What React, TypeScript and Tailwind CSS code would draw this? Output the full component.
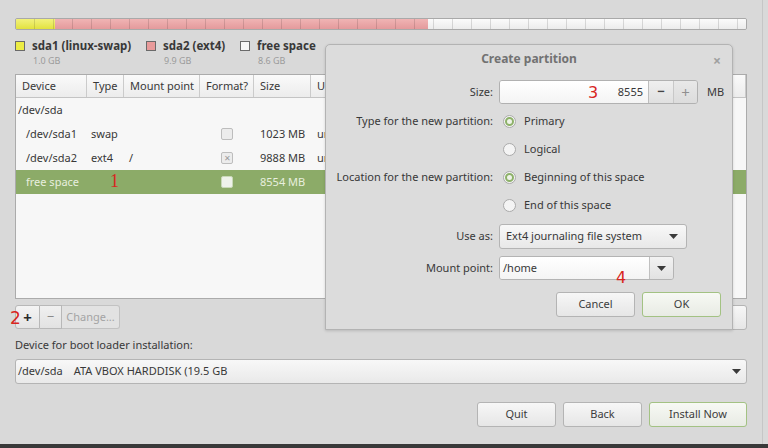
import React from 'react'

function Arrow() {
  return (
    <svg width="9" height="5" viewBox="0 0 9 5" className="shrink-0">
      <path d="M0 0h9L4.5 5z" fill="#3a3a3a" />
    </svg>
  )
}

function Check({ mark, onGreen }: { mark?: boolean; onGreen?: boolean }) {
  return (
    <div
      className={
        onGreen
          ? 'w-[12px] h-[12px] rounded-[2px] border border-[#c9d9b8] bg-[#eef2ea]'
          : 'w-[12px] h-[12px] rounded-[2px] border border-[#bdbdbd] bg-[#ececec] flex items-center justify-center'
      }
    >
      {mark && <span className="text-[8px] leading-none text-[#9a9a9a]">✕</span>}
    </div>
  )
}

function Radio({ on, label }: { on?: boolean; label: string }) {
  return (
    <div className="flex items-center gap-[8px]">
      <div className="w-[13px] h-[13px] rounded-full border border-[#aaaaaa] bg-[#f4f4f4] flex items-center justify-center">
        {on && <div className="w-[9px] h-[9px] rounded-full border-2 border-[#8db169] bg-[#eef3e8]" />}
      </div>
      <span>{label}</span>
    </div>
  )
}

const btn =
  'h-[25px] flex items-center justify-center rounded-[3px] border border-[#b4b4b4] bg-gradient-to-b from-[#f7f7f7] to-[#e6e6e6] text-[#3c3c3c]'
const btnOk =
  'h-[25px] flex items-center justify-center rounded-[3px] border border-[#a3c283] bg-gradient-to-b from-[#f7f9f4] to-[#e8ebe4] text-[#3c3c3c]'

const cols = 'grid grid-cols-[71px_37px_76px_54px_57px_90px_1fr]'

function Row({
  dev,
  type,
  mount,
  box,
  size,
  used,
  indent,
  selected,
}: {
  dev: string
  type?: string
  mount?: string
  box?: 'empty' | 'x' | 'green'
  size?: string
  used?: string
  indent?: boolean
  selected?: boolean
}) {
  return (
    <div className={`${cols} h-[24px] items-center ${selected ? 'bg-[#8cab68] text-[#e8efdf]' : ''}`}>
      <span className={indent ? 'pl-[10px]' : 'pl-[2px]'}>{dev}</span>
      <span className="pl-[4px]">{type}</span>
      <span className="pl-[5px]">{mount}</span>
      <div className="flex justify-center">
        {box === 'empty' && <Check />}
        {box === 'x' && <Check mark />}
        {box === 'green' && <Check onGreen />}
      </div>
      <span className="pl-[6px]">{size}</span>
      <span className="pl-[6px]">{used}</span>
      <span />
    </div>
  )
}

export default function App() {
  return (
    <div className="w-[768px] h-[448px] bg-[#d9d9d9] overflow-hidden flex flex-col font-['Noto_Sans',sans-serif] text-[11px] text-[#383838]">
      <div className="relative flex-1 w-[763px] border-r border-[#c6c6c6] pl-[15px] pr-[15px] pt-[18px] flex flex-col">
        {/* partition bar */}
        <div className="relative h-[12px] flex border border-[#a9a9a9] rounded-[2px] overflow-hidden">
          <div className="w-[39px] bg-gradient-to-b from-[#f2f27a] to-[#e2e23c]" />
          <div className="w-[373px] bg-gradient-to-b from-[#f0b4b4] to-[#e49a9c]" />
          <div className="flex-1 bg-gradient-to-b from-[#fbfbfb] to-[#ececec]" />
          <div className="absolute inset-0 bg-[repeating-linear-gradient(to_right,transparent_0,transparent_18px,rgba(0,0,0,0.13)_18px,rgba(0,0,0,0.13)_19px)]" />
        </div>

        {/* legend */}
        <div className="flex mt-[6px] h-[38px]">
          {[
            { c: 'bg-[#ecec44]', t: 'sda1 (linux-swap)', s: '1.0 GB', w: 'w-[131px]' },
            { c: 'bg-[#e89a9a]', t: 'sda2 (ext4)', s: '9.9 GB', w: 'w-[94px]' },
            { c: 'bg-[#f6f6f6]', t: 'free space', s: '8.6 GB', w: 'w-[100px]' },
          ].map((l) => (
            <div key={l.t} className={`${l.w} flex gap-[7px]`}>
              <div className={`w-[10px] h-[10px] mt-[5px] border border-[#6a6a6a] ${l.c}`} />
              <div className="flex flex-col">
                <span className="font-bold text-[11.5px] leading-[20px] text-[#383838]">{l.t}</span>
                <span className="text-[9px] leading-[10px] text-[#9b9b9b] pl-[1px]">{l.s}</span>
              </div>
            </div>
          ))}
        </div>

        {/* table */}
        <div className="h-[225px] border border-[#ababab] bg-[#f7f7f7] flex flex-col">
          <div className={`${cols} h-[23px] items-center bg-gradient-to-b from-[#fafafa] to-[#ececec] border-b border-[#c4c4c4]`}>
            {['Device', 'Type', 'Mount point', 'Format?', 'Size', 'Used', 'System'].map((h) => (
              <span key={h} className="h-full flex items-center px-[6px] border-r border-[#cbcbcb] whitespace-nowrap">
                {h}
              </span>
            ))}
          </div>
          <Row dev="/dev/sda" />
          <Row dev="/dev/sda1" indent type="swap" box="empty" size="1023 MB" used="unknown" />
          <Row dev="/dev/sda2" indent type="ext4" mount="/" box="x" size="9888 MB" used="unknown" />
          <Row dev="free space" indent box="green" size="8554 MB" selected />
        </div>

        {/* table buttons */}
        <div className="mt-[6px] flex justify-between">
          <div className="flex">
            <div className="w-[25px] h-[24px] flex items-center justify-center border border-[#b8b8b8] rounded-l-[3px] bg-gradient-to-b from-[#f4f4f4] to-[#e4e4e4] text-[15px] font-bold text-[#2a2a2a]">
              +
            </div>
            <div className="w-[22px] h-[24px] flex items-center justify-center border-y border-r border-[#b8b8b8] bg-gradient-to-b from-[#f0f0f0] to-[#e2e2e2] text-[13px] text-[#8a8a8a]">
              −
            </div>
            <div className="w-[58px] h-[24px] flex items-center justify-center border-y border-r border-[#c2c2c2] rounded-r-[3px] bg-[#e2e2e2] text-[#a4a4a4]">
              Change...
            </div>
          </div>
          <div className={`${btn} w-[120px] h-[24px]`} />
        </div>

        <div className="mt-[8px] h-[14px] leading-[14px]">Device for boot loader installation:</div>

        <div className="mt-[7px] h-[25px] flex items-center justify-between pl-[2px] pr-[5px] rounded-[3px] border border-[#b4b4b4] bg-gradient-to-b from-[#f8f8f8] to-[#e9e9e9]">
          <div className="flex gap-[11px]">
            <span>/dev/sda</span>
            <span>ATA VBOX HARDDISK (19.5 GB</span>
          </div>
          <Arrow />
        </div>

        <div className="mt-[18px] flex justify-end gap-[7px]">
          <div className={`${btn} w-[79px]`}>Quit</div>
          <div className={`${btn} w-[79px]`}>Back</div>
          <div className={`${btnOk} w-[98px]`}>Install Now</div>
        </div>

        {/* dialog */}
        <div className="absolute left-[325px] top-[44px] w-[408px] h-[286px] bg-[#dcdcdc] border border-[#b3b3b3] rounded-t-[5px] shadow-[0_1px_3px_rgba(0,0,0,0.15)] flex flex-col">
          <div className="relative h-[28px] flex items-center justify-center">
            <span className="font-bold text-[12px] text-[#727272]">Create partition</span>
            <span className="absolute right-[11px] top-[5px] text-[14px] font-bold text-[#a0a0a0]">×</span>
          </div>

          <div className="mt-[7px] flex items-center h-[24px]">
            <span className="w-[167px] text-right">Size:</span>
            <div className="ml-[6px] flex h-[24px] border border-[#b1b1b1] rounded-[3px] overflow-hidden">
              <div className="w-[148px] bg-gradient-to-b from-[#ffffff] to-[#f4f4f4] flex items-center justify-end pr-[5px]">
                8555
              </div>
              <div className="w-[25px] border-l border-[#bdbdbd] bg-gradient-to-b from-[#efefef] to-[#e0e0e0] flex items-center justify-center font-bold text-[13px] text-[#444]">
                −
              </div>
              <div className="w-[24px] border-l border-[#c8c8c8] bg-gradient-to-b from-[#e8e8e8] to-[#dcdcdc] flex items-center justify-center text-[15px] text-[#8f8f8f]">
                +
              </div>
            </div>
            <span className="ml-[9px]">MB</span>
          </div>

          <div className="flex items-center h-[28px] mt-[3px]">
            <span className="w-[167px] text-right">Type for the new partition:</span>
            <div className="ml-[10px]">
              <Radio on label="Primary" />
            </div>
          </div>
          <div className="flex items-center h-[28px]">
            <span className="w-[167px]" />
            <div className="ml-[10px]">
              <Radio label="Logical" />
            </div>
          </div>
          <div className="flex items-center h-[28px]">
            <span className="w-[167px] text-right whitespace-nowrap">Location for the new partition:</span>
            <div className="ml-[10px]">
              <Radio on label="Beginning of this space" />
            </div>
          </div>
          <div className="flex items-center h-[29px]">
            <span className="w-[167px]" />
            <div className="ml-[10px]">
              <Radio label="End of this space" />
            </div>
          </div>

          <div className="flex items-center h-[25px] mt-[4px]">
            <span className="w-[167px] text-right">Use as:</span>
            <div className="ml-[6px] w-[188px] h-[25px] flex items-center justify-between pl-[6px] pr-[8px] rounded-[3px] border border-[#b4b4b4] bg-gradient-to-b from-[#f8f8f8] to-[#e8e8e8]">
              <span>Ext4 journaling file system</span>
              <Arrow />
            </div>
          </div>

          <div className="flex items-center h-[24px] mt-[7px]">
            <span className="w-[167px] text-right">Mount point:</span>
            <div className="ml-[6px] w-[175px] h-[24px] flex rounded-[3px] border border-[#b4b4b4] overflow-hidden">
              <div className="flex-1 bg-gradient-to-b from-[#ffffff] to-[#f4f4f4] flex items-center pl-[3px]">/home</div>
              <div className="w-[24px] border-l border-[#c0c0c0] bg-gradient-to-b from-[#f2f2f2] to-[#e2e2e2] flex items-center justify-center">
                <Arrow />
              </div>
            </div>
          </div>

          <div className="mt-[12px] flex justify-end gap-[7px] pr-[11px]">
            <div className={`${btn} w-[79px]`}>Cancel</div>
            <div className={`${btnOk} w-[79px]`}>OK</div>
          </div>
        </div>

        {/* annotations */}
        <span className="absolute left-[110px] top-[172px] font-['Liberation_Serif',serif] text-[18px] leading-none text-[#d8261f]">1</span>
        <span className="absolute left-[10px] top-[310px] font-['DejaVu_Sans',sans-serif] text-[17px] leading-none text-[#d8261f]">2</span>
        <span className="absolute left-[588px] top-[85px] font-['DejaVu_Sans',sans-serif] text-[16px] leading-none text-[#d8261f]">3</span>
        <span className="absolute left-[616px] top-[270px] font-['DejaVu_Sans',sans-serif] text-[16px] leading-none text-[#d8261f]">4</span>
      </div>
      <div className="h-[4px] bg-[#393939]" />
    </div>
  )
}
